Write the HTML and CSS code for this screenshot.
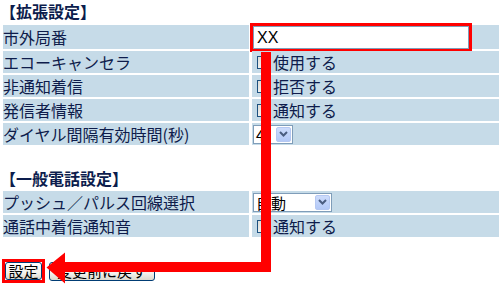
FILE: index.html
```html
<!DOCTYPE html>
<html lang="ja">
<head>
    <meta charset="UTF-8">
    <title>電話設定</title>
    <link rel="stylesheet" href="styles.css">
</head>
<body>
    <div class="page">
        <h2 class="sec-title">【拡張設定】</h2>
        <div class="form-grid first-tall">
            <div class="label">市外局番</div>
            <div class="value value-input">
                <span class="mark-box"><input class="text-input" type="text" value="XX"></span>
            </div>
            <div class="label">エコーキャンセラ</div>
            <div class="value"><input class="check" type="checkbox">使用する</div>
            <div class="label">非通知着信</div>
            <div class="value"><input class="check" type="checkbox">拒否する</div>
            <div class="label">発信者情報</div>
            <div class="value"><input class="check" type="checkbox">通知する</div>
            <div class="label">ダイヤル間隔有効時間(秒)</div>
            <div class="value">
                <span class="select select-small"><span class="select-text">4</span><span class="select-btn"><svg width="9" height="6" viewBox="0 0 9 6"><path d="M1 1 L4.5 4.5 L8 1" fill="none" stroke="#4a5d80" stroke-width="2"/></svg></span></span>
            </div>
        </div>

        <h2 class="sec-title sec-title-2">【一般電話設定】</h2>
        <div class="form-grid">
            <div class="label">プッシュ／パルス回線選択</div>
            <div class="value">
                <span class="select select-wide"><span class="select-text">自動</span><span class="select-btn"><svg width="9" height="6" viewBox="0 0 9 6"><path d="M1 1 L4.5 4.5 L8 1" fill="none" stroke="#4a5d80" stroke-width="2"/></svg></span></span>
            </div>
            <div class="label">通話中着信通知音</div>
            <div class="value"><input class="check" type="checkbox">通知する</div>
        </div>

        <div class="buttons">
            <span class="mark-btn"><button class="btn btn-set" type="button">設定</button></span>
            <button class="btn btn-reset" type="button">変更前に戻す</button>
        </div>

        <!-- 注釈の矢印 -->
        <svg class="arrow" width="502" height="289" viewBox="0 0 502 289">
            <path d="M261 52 H271 V272 H65 V283.5 L46.5 267.5 L65 252.5 V262 H261 Z" fill="#ff0000"/>
        </svg>
    </div>
</body>
</html>
```

FILE: styles.css
```css
*{
    padding: 0;
    margin: 0;
}
body{
    background-color: #ffffff;
    font-family: "Noto Sans CJK JP", "Noto Sans", sans-serif;
    color: #0e1c4b;
}
.page{
    position: relative;
    width: 502px;
    height: 289px;
    overflow: hidden;
}
.sec-title{
    font-size: 16px;
    font-weight: bold;
    line-height: 18px;
    padding-top: 2px;
    padding-bottom: 5px;
    color: #0c1d4d;
    white-space: nowrap;
}
.sec-title-2{
    margin-top: 22px;
    padding-bottom: 4px;
}
.form-grid{
    display: grid;
    grid-template-columns: 246px 247px;
    grid-auto-rows: 22px;
    column-gap: 3px;
    row-gap: 2px;
    margin-left: 3px;
}
.form-grid.first-tall{
    grid-template-rows: 24px;
}
.label,
.value{
    background-color: #c6dbe8;
    font-size: 16px;
    line-height: 22px;
    display: flex;
    align-items: center;
    white-space: nowrap;
}
.value-input{
    align-items: flex-start;
    padding-top: 1px;
    padding-left: 1px;
}
.mark-box{
    display: inline-block;
    border: 3px solid #ff0000;
    margin: -3px;
    line-height: 0;
}
.text-input{
    width: 216px;
    height: 23px;
    box-sizing: border-box;
    border: 1px solid #7f9db9;
    padding: 0 3px;
    font-family: "Liberation Sans", Arial, sans-serif;
    font-size: 16px;
    color: #000000;
    outline: none;
}
.check{
    appearance: none;
    width: 13px;
    height: 13px;
    box-sizing: border-box;
    border: 1px solid #1c5180;
    background: linear-gradient(135deg, #dcdcd7, #ffffff);
    margin: 0 3px 0 5px;
}
.select{
    display: inline-flex;
    align-items: center;
    justify-content: space-between;
    height: 19px;
    box-sizing: border-box;
    border: 1px solid #7f9db9;
    background-color: #ffffff;
    margin-left: 1px;
    color: #000000;
}
.select-small{
    width: 40px;
}
.select-wide{
    width: 79px;
}
.select-text{
    font-size: 15px;
    line-height: 17px;
    padding-left: 2px;
}
.select-btn{
    width: 15px;
    height: 15px;
    margin: 1px;
    box-sizing: border-box;
    border: 1px solid #b5c8f2;
    border-radius: 2px;
    background: linear-gradient(#cddcfc, #b3c9f7);
    display: flex;
    align-items: center;
    justify-content: center;
}
.buttons{
    display: flex;
    align-items: center;
    gap: 4px;
    margin-top: 22px;
    padding-left: 2px;
    height: 24px;
}
.mark-btn{
    display: inline-block;
    border: 3px solid #ff0000;
    line-height: 0;
}
.btn{
    font-family: "Noto Sans CJK JP", sans-serif;
    font-size: 15px;
    line-height: 16px;
    color: #000000;
    border: 1px solid #003c74;
    border-radius: 3px;
    background: linear-gradient(#ffffff, #f3f2ee 60%, #dcd8cd);
    box-sizing: border-box;
    padding: 0;
}
.btn-set{
    width: 37px;
    height: 18px;
}
.btn-reset{
    width: 106px;
    height: 19px;
}
.arrow{
    position: absolute;
    left: 0;
    top: 0;
    pointer-events: none;
}
```
